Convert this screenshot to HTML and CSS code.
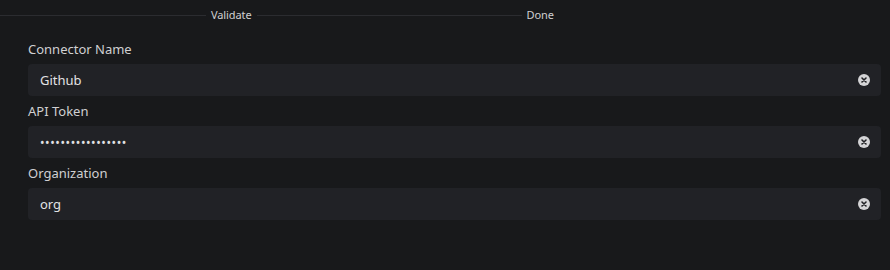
FILE: index.html
```html
<!DOCTYPE html>
<html>
<head>
<meta charset="utf-8">
<link rel="stylesheet" href="styles.css">
</head>
<body>
<div class="stepper">
  <div class="line line-a"></div>
  <div class="step">Validate</div>
  <div class="line line-b"></div>
  <div class="step">Done</div>
</div>
<form class="form">
  <div class="field">
    <label class="label">Connector Name</label>
    <div class="input"><span class="value">Github</span><span class="clear"><svg width="12" height="12" viewBox="0 0 12 12"><circle cx="6" cy="6" r="6" fill="#d4d4d6"/><path d="M4 4L8 8M8 4L4 8" stroke="#202124" stroke-width="1.6" stroke-linecap="round"/></svg></span></div>
  </div>
  <div class="field">
    <label class="label">API Token</label>
    <div class="input"><span class="value dots">•••••••••••••••••</span><span class="clear"><svg width="12" height="12" viewBox="0 0 12 12"><circle cx="6" cy="6" r="6" fill="#d4d4d6"/><path d="M4 4L8 8M8 4L4 8" stroke="#202124" stroke-width="1.6" stroke-linecap="round"/></svg></span></div>
  </div>
  <div class="field">
    <label class="label">Organization</label>
    <div class="input"><span class="value">org</span><span class="clear"><svg width="12" height="12" viewBox="0 0 12 12"><circle cx="6" cy="6" r="6" fill="#d4d4d6"/><path d="M4 4L8 8M8 4L4 8" stroke="#202124" stroke-width="1.6" stroke-linecap="round"/></svg></span></div>
  </div>
</form>
</body>
</html>
```

FILE: styles.css
```css
html, body {
  margin: 0;
  padding: 0;
  background: #18191b;
  font-family: "Noto Sans", "Open Sans", sans-serif;
  color: #d6d6d8;
}
body {
  width: 890px;
  height: 270px;
  overflow: hidden;
}
.stepper {
  display: flex;
  align-items: center;
  height: 30px;
  font-size: 11px;
  color: #cfcfd1;
}
.line {
  height: 1px;
  background: #2b2c30;
}
.line-a { width: 206px; }
.line-b { width: 265px; }
.step {
  padding: 0 5px;
  line-height: 30px;
  letter-spacing: -0.1px;
}
.form {
  display: flex;
  flex-direction: column;
  gap: 6px;
  padding: 10px 9px 0 28px;
}
.field {
  display: flex;
  flex-direction: column;
}
.label {
  font-size: 13px;
  line-height: 18px;
  margin-bottom: 6px;
  color: #d0d0d2;
}
.input {
  display: flex;
  align-items: center;
  height: 32px;
  background: #212226;
  border-radius: 4px;
  padding: 0 11px 0 12px;
  font-size: 13px;
  color: #e2e2e4;
}
.value {
  flex: 1;
}
.dots {
  font-size: 12px;
  letter-spacing: 0.6px;
}
.clear {
  display: flex;
  width: 12px;
  height: 12px;
}
```
